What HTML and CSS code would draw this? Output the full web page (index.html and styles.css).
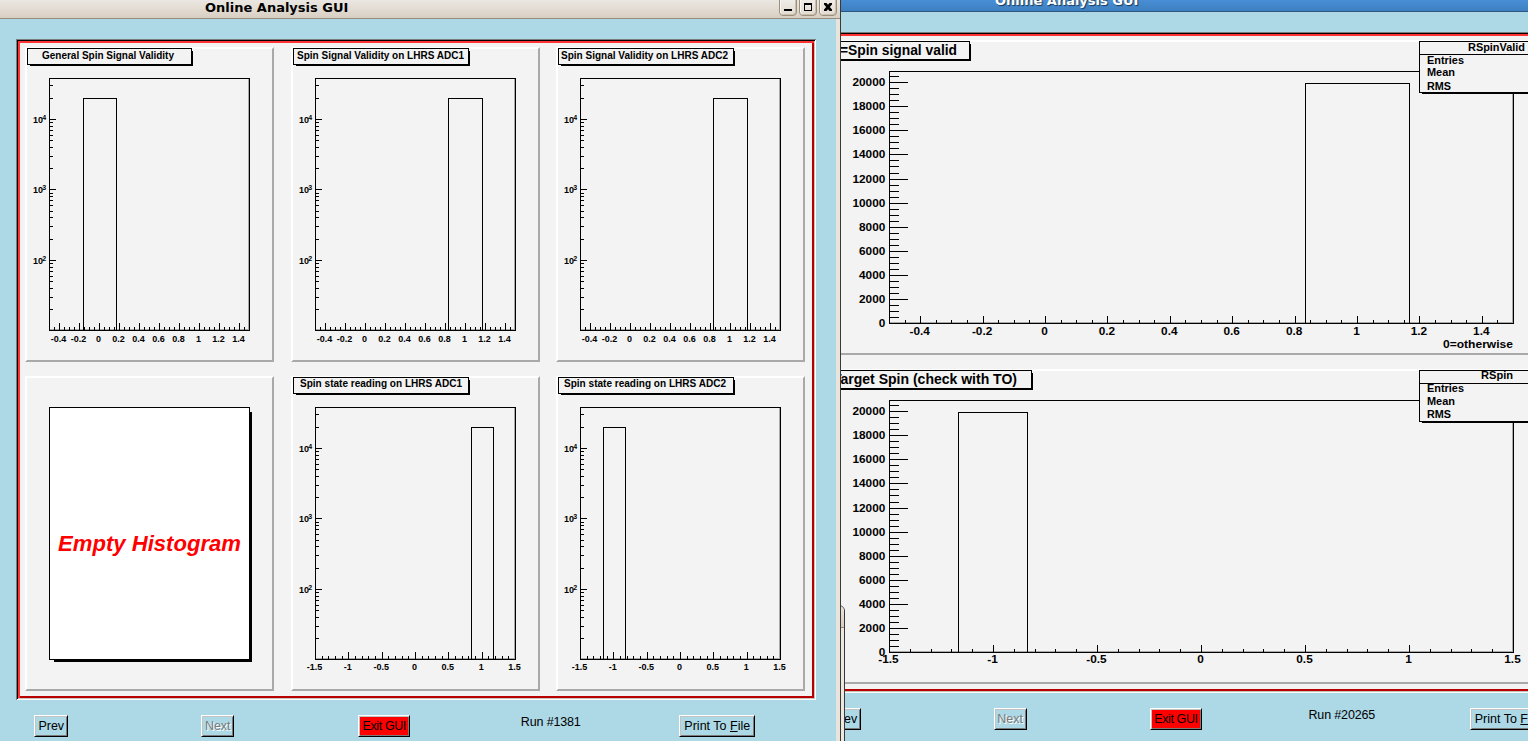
FILE: index.html
```html
<!DOCTYPE html>
<html lang="en">
<head>
<meta charset="utf-8">
<title>Online Analysis GUI</title>
<link rel="stylesheet" href="styles.css">
</head>
<body>
<div class="desktop">

  <section class="window window-back">
    <header class="titlebar titlebar-blue"><span class="title">Online Analysis GUI</span></header>
    <div class="body">
      <div class="canvas canvas-wide">
        <div class="pad"><svg class="plot" data-plot="spinValid"></svg></div>
        <div class="pad"><svg class="plot" data-plot="spin"></svg></div>
      </div>
      <footer class="toolbar">
        <button class="btn btn-prev">Prev</button>
        <button class="btn btn-next" disabled>Next</button>
        <button class="btn btn-exit">Exit GUI</button>
        <span class="run">Run #20265</span>
        <button class="btn btn-print">Print To <u>F</u>ile</button>
      </footer>
    </div>
  </section>

  <section class="sliver"><div class="sliver-bar"></div></section>

  <section class="window window-front">
    <header class="titlebar titlebar-beige">
      <span class="title">Online Analysis GUI</span>
      <div class="controls">
        <span class="ctl"><svg width="16" height="16"><path d="M4 9h8v2H4z"/></svg></span>
        <span class="ctl"><svg width="16" height="16"><path fill-rule="evenodd" d="M4 3h8v8H4zM5 5h6v5H5z"/></svg></span>
        <span class="ctl"><svg width="16" height="16"><path d="M4 3h2.500L8 4.800 9.500 3H12v1.500L9.800 7 12 9.500V11H9.500L8 9.200 6.500 11H4v-1.500L6.200 7 4 4.500z"/></svg></span>
      </div>
    </header>
    <div class="body">
      <div class="canvas canvas-grid">
        <div class="pad"><svg class="plot" data-plot="general"></svg></div>
        <div class="pad"><svg class="plot" data-plot="validAdc1"></svg></div>
        <div class="pad"><svg class="plot" data-plot="validAdc2"></svg></div>
        <div class="pad"><svg class="plot" data-plot="empty"></svg></div>
        <div class="pad"><svg class="plot" data-plot="stateAdc1"></svg></div>
        <div class="pad"><svg class="plot" data-plot="stateAdc2"></svg></div>
      </div>
      <footer class="toolbar">
        <button class="btn btn-prev">Prev</button>
        <button class="btn btn-next" disabled>Next</button>
        <button class="btn btn-exit">Exit GUI</button>
        <span class="run">Run #1381</span>
        <button class="btn btn-print">Print To <u>F</u>ile</button>
      </footer>
    </div>
  </section>

</div>
<script src="plots.js"></script>
</body>
</html>
```
FILE: styles.css
```css
* { box-sizing: border-box; }

body {
  margin: 0;
  overflow: hidden;
  background: #add8e6;
  font-family: "Liberation Sans", Arial, sans-serif;
}

.desktop {
  position: relative;
  width: 1528px;
  height: 741px;
  overflow: hidden;
}

/* Windows */
.window {
  position: absolute;
  display: flex;
  flex-direction: column;
}

.window-front {
  left: 0;
  top: 0;
  width: 841px;
  height: 741px;
  border-right: 1px solid #3c3833;
}

.window-back {
  left: 792px;
  top: -7px;
  width: 841px;
  height: 800px;
}

.titlebar {
  display: flex;
  flex: none;
  height: 19px;
  font: bold 13px/19px "DejaVu Sans", sans-serif;
}

.titlebar-beige {
  position: relative;
  justify-content: space-between;
  background: linear-gradient(#eae6e1, #e3dcd3 50%, #d8cfc2);
  border-bottom: 1px solid #988b7c;
  color: #000;
}

.titlebar-blue {
  background: linear-gradient(#4a90d9 30%, #3d80c0);
  border-bottom: 1px solid #2d5580;
  color: #fff;
  text-shadow: 1px 1px 1px #1b3755;
}

.title {
  padding-left: 205px;
  margin-top: -2px;
  white-space: nowrap;
}

.titlebar-blue .title { padding-left: 203px; }

.controls {
  display: flex;
  gap: 2px;
  padding-right: 3px;
}

.ctl {
  width: 18px;
  height: 20px;
  margin-top: -4px;
  padding: 3px 0 0 0;
  border: 1px solid #9c907b;
  border-radius: 4px;
  background: linear-gradient(#f2eeea, #e2dbd2);
  box-shadow: inset 1px 0 #f8f6f3, inset -1px -1px #c9c0b2;
}

.ctl svg { display: block; }

.body {
  flex: 1;
  padding: 20px 0 0 16px;
  background: #add8e6;
}

.window-front .body {
  border-right: 4px solid #e8e3db;
}

/* Plot canvas with sunken outer edge and raised red edge */
.canvas {
  width: 800px;
  height: 661px;
  padding: 8px 0 0 9px;
  background: #f3f3f3;
  box-shadow:
    inset 1px 1px #7b7b7b, inset -1px -1px #fff,
    inset 2px 2px #000, inset -2px -2px #c8c4bc,
    inset 4px 4px #ff3333, inset -4px -4px #b90000;
}

.canvas-grid {
  display: grid;
  grid-template-columns: 266px 265px 249px;
  grid-template-rows: 329px 315px;
}

.canvas-wide {
  display: grid;
  grid-template-columns: 780px;
  grid-template-rows: 329px 315px;
}

.pad {
  height: 315px;
  border: 2px solid;
  border-color: #fff #a9a9a9 #a9a9a9 #fff;
}

.canvas-grid .pad { width: 249px; }

.plot {
  display: block;
  width: 249px;
  height: 315px;
  margin: -2px;
  overflow: visible;
}

.canvas-wide .plot { width: 780px; }

.plot path, .plot rect { shape-rendering: crispEdges; }
.plot text { font-weight: bold; fill: #000; }
.frame { fill: none; stroke: #000; }
.fill { fill: #f3f3f3; stroke: #000; }
.paper { fill: #fff; stroke: #000; }
.shade { fill: none; stroke: #a9a9a9; }
.solid { fill: #000; }
.plot .notice { fill: #f00; font-style: italic; }

/* Toolbar */
.toolbar {
  display: grid;
  grid-template-columns: repeat(5, 166.5px);
  justify-items: center;
  margin: 15px 0 0 -48px;
  height: 22px;
}

.window-back .toolbar {
  grid-template-columns: repeat(5, 165.8px);
  margin-left: -46.5px;
}

.btn {
  height: 22px;
  padding: 0;
  border: 1px solid;
  border-color: #fff #000 #000 #fff;
  background: #add8e6;
  box-shadow: inset 1px 1px #c3c3c3, inset -1px -1px #7b7b7b;
  color: #000;
  font: 12.5px/20px "Liberation Sans", Arial, sans-serif;
  white-space: nowrap;
}

.btn-prev { width: 34px; }
.btn-next { width: 33px; color: #7b7b7b; text-shadow: 1px 1px #fff; }
.btn-exit { width: 52px; background: #f00; letter-spacing: -0.4px; }
.btn-print { width: 76px; }

.run {
  font-size: 12.5px;
  line-height: 15px;
  letter-spacing: -0.15px;
}

/* Edge of a third window, visible between the two */
.sliver {
  position: absolute;
  left: 825px;
  top: 605px;
  width: 20px;
  height: 140px;
  border: 1px solid #3c3833;
  border-radius: 0 6px 0 0;
  background: #ece8e1;
}

.sliver-bar {
  height: 22px;
  border-bottom: 1px solid #988b7c;
  border-radius: 0 5px 0 0;
  background: linear-gradient(#eae6e1, #d8cfc2);
}
```
FILE: plots.js
```js
// Small histogram renderer. All coordinates are local to a pad.
const TOP = 31, BOTTOM = 283;

const smallX = { left: 24, right: 224, font: 9 };
const wideX = { left: 72, right: 696, font: 11.8 };

const validAxis = { min: -0.5, max: 1.5, minor: 0.05, every: 4, labelY: 295,
  labels: [-0.4, -0.2, 0, 0.2, 0.4, 0.6, 0.8, 1, 1.2, 1.4] };
const stateAxis = { min: -1.5, max: 1.5, minor: 0.1, every: 5, labelY: 294,
  labels: [-1.5, -1, -0.5, 0, 0.5, 1, 1.5] };

const plots = {
  general: { size: smallX, axis: validAxis, log: true, bar: [58, 91, 51],
    title: { box: [2, 1, 165, 17], text: "General Spin Signal Validity", x: 17, y: 12, w: 132, font: 10 } },
  validAdc1: { size: smallX, axis: validAxis, log: true, bar: [157, 191, 51],
    title: { box: [2, 1, 176, 17], text: "Spin Signal Validity on LHRS ADC1", x: 6, y: 12, w: 167, font: 10 } },
  validAdc2: { size: smallX, axis: validAxis, log: true, bar: [157, 191, 51],
    title: { box: [2, 1, 176, 17], text: "Spin Signal Validity on LHRS ADC2", x: 5, y: 12, w: 167, font: 10 } },
  stateAdc1: { size: smallX, axis: stateAxis, log: true, bar: [180, 202, 51],
    title: { box: [2, 1, 176, 17], text: "Spin state reading on LHRS ADC1", x: 9, y: 11, w: 162, font: 10 } },
  stateAdc2: { size: smallX, axis: stateAxis, log: true, bar: [47, 69, 51],
    title: { box: [2, 1, 176, 17], text: "Spin state reading on LHRS ADC2", x: 8, y: 11, w: 162, font: 10 } },
  spinValid: { size: wideX, axis: validAxis, log: false, bar: [488, 592, 43],
    title: { box: [2, 1, 151, 19], text: "=Spin signal valid", x: 23, y: 15, w: 117, font: 14 },
    axisTitle: "0=otherwise",
    stats: { name: "RSpinValid", nameX: 651, nameW: 57, rows: [24, 36, 50], nameY: 11 } },
  spin: { size: wideX, axis: stateAxis, log: false, bar: [141, 210, 43],
    title: { box: [2, 1, 213, 19], text: "Target Spin (check with TO)", x: 16, y: 15, w: 184, font: 14 },
    stats: { name: "RSpin", nameX: 664, nameW: 32, rows: [23, 36, 49], nameY: 10 } },
};

const rect = (cls, x, y, w, h) =>
  `<rect class="${cls}" x="${x}" y="${y}" width="${w}" height="${h}"/>`;
const outline = (cls, x, y, w, h) => rect(cls, x + 0.5, y + 0.5, w - 1, h - 1);
const text = (s, x, y, font, opts = "") =>
  `<text x="${x}" y="${y}" font-size="${font}" ${opts}>${s}</text>`;
const fit = (w) => `textLength="${w}" lengthAdjust="spacingAndGlyphs"`;

function titleBox(t) {
  const [x, y, w, h] = t.box;
  return rect("solid", x + 3, y + 3, w - 2, h - 2) +
    outline("fill", x, y, w, h) + text(t.text, t.x, t.y, t.font, fit(t.w));
}

function drawStats(s) {
  let out = rect("solid", 605, 4, 160, 50) + outline("fill", 602, 1, 160, 52);
  out += rect("solid", 602, 14, 160, 1);
  out += text(s.name, s.nameX, s.nameY, 11.5, fit(s.nameW));
  ["Entries", "Mean", "RMS"].forEach((label, i) => {
    out += text(label, 610, s.rows[i], 11.5, fit([37, 28, 24][i]));
  });
  return out;
}

function draw(p) {
  const { left, right, font } = p.size;
  const { axis } = p;
  const toX = (v) => left + (v - axis.min) / (axis.max - axis.min) * (right - left);
  let out = `<path class="shade" d="M${left + 1} ${BOTTOM - 0.5}H${right - 0.5}V${TOP + 1}"/>`;
  out += outline("frame", left, TOP, right - left + 1, BOTTOM - TOP + 1);

  const [x0, x1, y0] = p.bar;
  out += `<path class="frame" d="M${x0 + 0.5} ${BOTTOM}V${y0 + 0.5}H${x1 + 0.5}V${BOTTOM}"/>`;

  const first = Math.round(axis.labels[0] / axis.minor);
  const from = Math.round(axis.min / axis.minor), to = Math.round(axis.max / axis.minor);
  for (let i = from + 1; i < to; i++) {
    const len = (i - first) % axis.every === 0 ? 7 : 3;
    out += rect("solid", Math.round(toX(i * axis.minor)), BOTTOM - len, 1, len);
  }
  axis.labels.forEach((v) => {
    out += text(v, toX(v) - 0.5, axis.labelY, font, 'text-anchor="middle"');
  });

  if (p.log) {
    const toY = (v) => Math.round(213 - 70.5 * (Math.log10(v) - 2) - 0.1);
    for (let e = 1; e <= 4; e++) {
      if (e > 1) {
        const y = toY(10 ** e);
        out += rect("solid", left, y, 7, 1);
        out += text("10", 8, y + 4, 9) + text(e, 17.3, y + 0.5, 7);
      }
      for (let k = 2; k <= (e === 4 ? 3 : 9); k++) out += rect("solid", left, toY(k * 10 ** e), 4, 1);
    }
  } else {
    for (let i = 0; i <= 41; i++) {
      const y = BOTTOM - i * 6.02, major = i % 4 === 0;
      out += rect("solid", left, Math.round(y), major ? 19 : 10, 1);
      if (major) out += text(i * 500, 68.3, Math.round(y) + 4, font, 'text-anchor="end"');
    }
    if (p.axisTitle) out += text(p.axisTitle, 626, 308, 11.8, fit(70));
  }
  out += titleBox(p.title);
  if (p.stats) out += drawStats(p.stats);
  return out;
}

document.querySelectorAll("svg.plot").forEach((svg) => {
  const key = svg.dataset.plot;
  svg.innerHTML = key === "empty"
    ? rect("solid", 29, 36, 198, 250) + outline("paper", 24, 31, 201, 253) +
      rect("solid", 224, 36, 3, 250) + text("Empty Histogram", 33, 175, 22, 'class="notice" ' + fit(183))
    : draw(plots[key]);
});
```
